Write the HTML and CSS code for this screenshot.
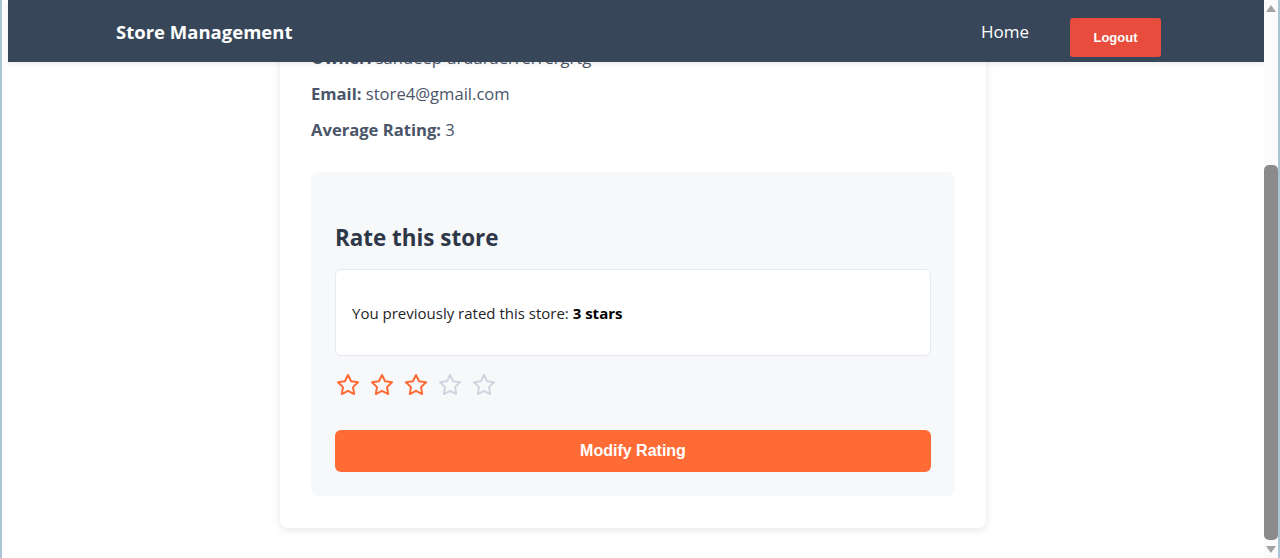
FILE: index.html
```html
<!DOCTYPE html>
<html lang="en">
<head>
<meta charset="utf-8">
<title>Store Management</title>
<link rel="stylesheet" href="styles.css">
</head>
<body>
<div class="window">
  <div class="viewport">
    <header class="topbar">
      <div class="brand">Store Management</div>
      <nav class="nav">
        <a class="nav-link" href="#">Home</a>
        <button class="logout" type="button">Logout</button>
      </nav>
    </header>
    <main class="page">
      <section class="card">
        <p class="info"><strong>Owner:</strong> sandeep-ardaraerrerrergrtg</p>
        <p class="info"><strong>Email:</strong> store4@gmail.com</p>
        <p class="info"><strong>Average Rating:</strong> 3</p>
        <div class="rate-box">
          <h3 class="rate-title">Rate this store</h3>
          <div class="prev-box">
            <p class="prev-text">You previously rated this store: <strong>3 stars</strong></p>
          </div>
          <div class="stars">
            <svg class="star on" viewBox="0 0 24 24"><path d="M12 2l3.09 6.26L22 9.27l-5 4.87 1.18 6.88L12 17.770l-6.18 3.25L7 14.14 2 9.27l6.91-1.01L12 2z"/></svg>
            <svg class="star on" viewBox="0 0 24 24"><path d="M12 2l3.09 6.26L22 9.27l-5 4.87 1.18 6.88L12 17.77l-6.18 3.25L7 14.14 2 9.27l6.91-1.01L12 2z"/></svg>
            <svg class="star on" viewBox="0 0 24 24"><path d="M12 2l3.09 6.26L22 9.27l-5 4.87 1.18 6.88L12 17.77l-6.18 3.25L7 14.14 2 9.27l6.91-1.01L12 2z"/></svg>
            <svg class="star off" viewBox="0 0 24 24"><path d="M12 2l3.09 6.26L22 9.27l-5 4.87 1.18 6.88L12 17.77l-6.18 3.25L7 14.14 2 9.27l6.91-1.01L12 2z"/></svg>
            <svg class="star off" viewBox="0 0 24 24"><path d="M12 2l3.09 6.26L22 9.27l-5 4.87 1.18 6.88L12 17.77l-6.18 3.25L7 14.14 2 9.27l6.91-1.01L12 2z"/></svg>
          </div>
          <button class="modify" type="button">Modify Rating</button>
        </div>
      </section>
    </main>
  </div>
  <div class="scrollbar">
    <div class="arrow up"></div>
    <div class="track"><div class="thumb"></div></div>
    <div class="arrow down"></div>
  </div>
</div>
</body>
</html>
```

FILE: styles.css
```css
html, body {
  margin: 0;
  padding: 0;
  height: 558px;
  overflow: hidden;
  background: #ffffff;
  font-family: "Open Sans", "Noto Sans", sans-serif;
}

.window {
  display: flex;
  height: 558px;
  border-left: 2px solid #a9c6d6;
  border-right: 2px solid #a9c6d6;
  box-sizing: border-box;
}

.viewport {
  flex: 1;
  position: relative;
  overflow: hidden;
}

.topbar {
  position: absolute;
  top: 0;
  left: 6px;
  right: 0;
  height: 62px;
  z-index: 10;
  background: #374759;
  box-shadow: 0 2px 6px rgba(0, 0, 0, 0.08);
  display: flex;
  align-items: center;
  justify-content: space-between;
  padding: 0 103px 0 108px;
}

.brand {
  color: #ffffff;
  font-weight: 700;
  font-size: 18.5px;
}

.nav {
  display: flex;
  align-items: center;
  gap: 41px;
}

.nav-link {
  color: #ffffff;
  text-decoration: none;
  font-size: 17px;
}

.logout {
  margin-top: 13px;
  width: 91px;
  height: 39px;
  border: none;
  border-radius: 3px;
  background: #e74c3c;
  color: #ffffff;
  font-family: "Liberation Sans", Arial, sans-serif;
  font-weight: 700;
  font-size: 13px;
}

.page {
  margin-top: -34px;
  display: flex;
  justify-content: center;
}

.card {
  width: 706px;
  box-sizing: border-box;
  background: #ffffff;
  border-radius: 8px;
  box-shadow: 0 2px 8px rgba(0, 0, 0, 0.1);
  padding: 80px 31px 32px;
  display: flex;
  flex-direction: column;
  gap: 12px;
}

.info {
  margin: 0;
  font-size: 16.6px;
  line-height: 24px;
  color: #4a5568;
}

.info strong {
  font-weight: 700;
}

.rate-box {
  margin-top: 18px;
  background: #f7f8fa;
  border-radius: 8px;
  padding: 24px;
  display: flex;
  flex-direction: column;
}

.rate-title {
  margin: 27px 0 16px;
  font-size: 22.4px;
  line-height: 30px;
  font-weight: 700;
  color: #2d3748;
}

.prev-box {
  background: #ffffff;
  border: 1px solid #e5e8ee;
  border-radius: 6px;
  padding: 16px 16px 15px;
}

.prev-text {
  margin: 16px 0;
  font-size: 15px;
  line-height: 22px;
  color: #1f2328;
}

.prev-text strong {
  color: #000000;
}

.stars {
  display: flex;
  gap: 10px;
  margin-top: 17px;
  padding-left: 1px;
}

.star {
  width: 24px;
  height: 24px;
  fill: none;
  stroke-width: 2;
  stroke-linejoin: round;
  stroke-linecap: round;
}

.star.on {
  stroke: #ff6b35;
}

.star.off {
  stroke: #cfd6df;
}

.modify {
  margin-top: 33px;
  height: 42px;
  border: none;
  border-radius: 6px;
  background: #ff6b35;
  color: #ffffff;
  font-family: "Liberation Sans", Arial, sans-serif;
  font-weight: 700;
  font-size: 16px;
}

.scrollbar {
  width: 14px;
  background: #fbfbfb;
  display: flex;
  flex-direction: column;
  align-items: center;
}

.arrow {
  width: 0;
  height: 0;
  border-left: 5px solid transparent;
  border-right: 5px solid transparent;
}

.arrow.up {
  margin-top: 5px;
  border-bottom: 7px solid #a3a3a3;
}

.arrow.down {
  margin-bottom: 5px;
  border-top: 7px solid #a3a3a3;
}

.track {
  flex: 1;
  width: 100%;
  display: flex;
  justify-content: center;
}

.thumb {
  margin-top: 153px;
  margin-bottom: 6px;
  width: 9px;
  flex: 1;
  background: #8b8b8b;
  border-radius: 5px;
}
```
